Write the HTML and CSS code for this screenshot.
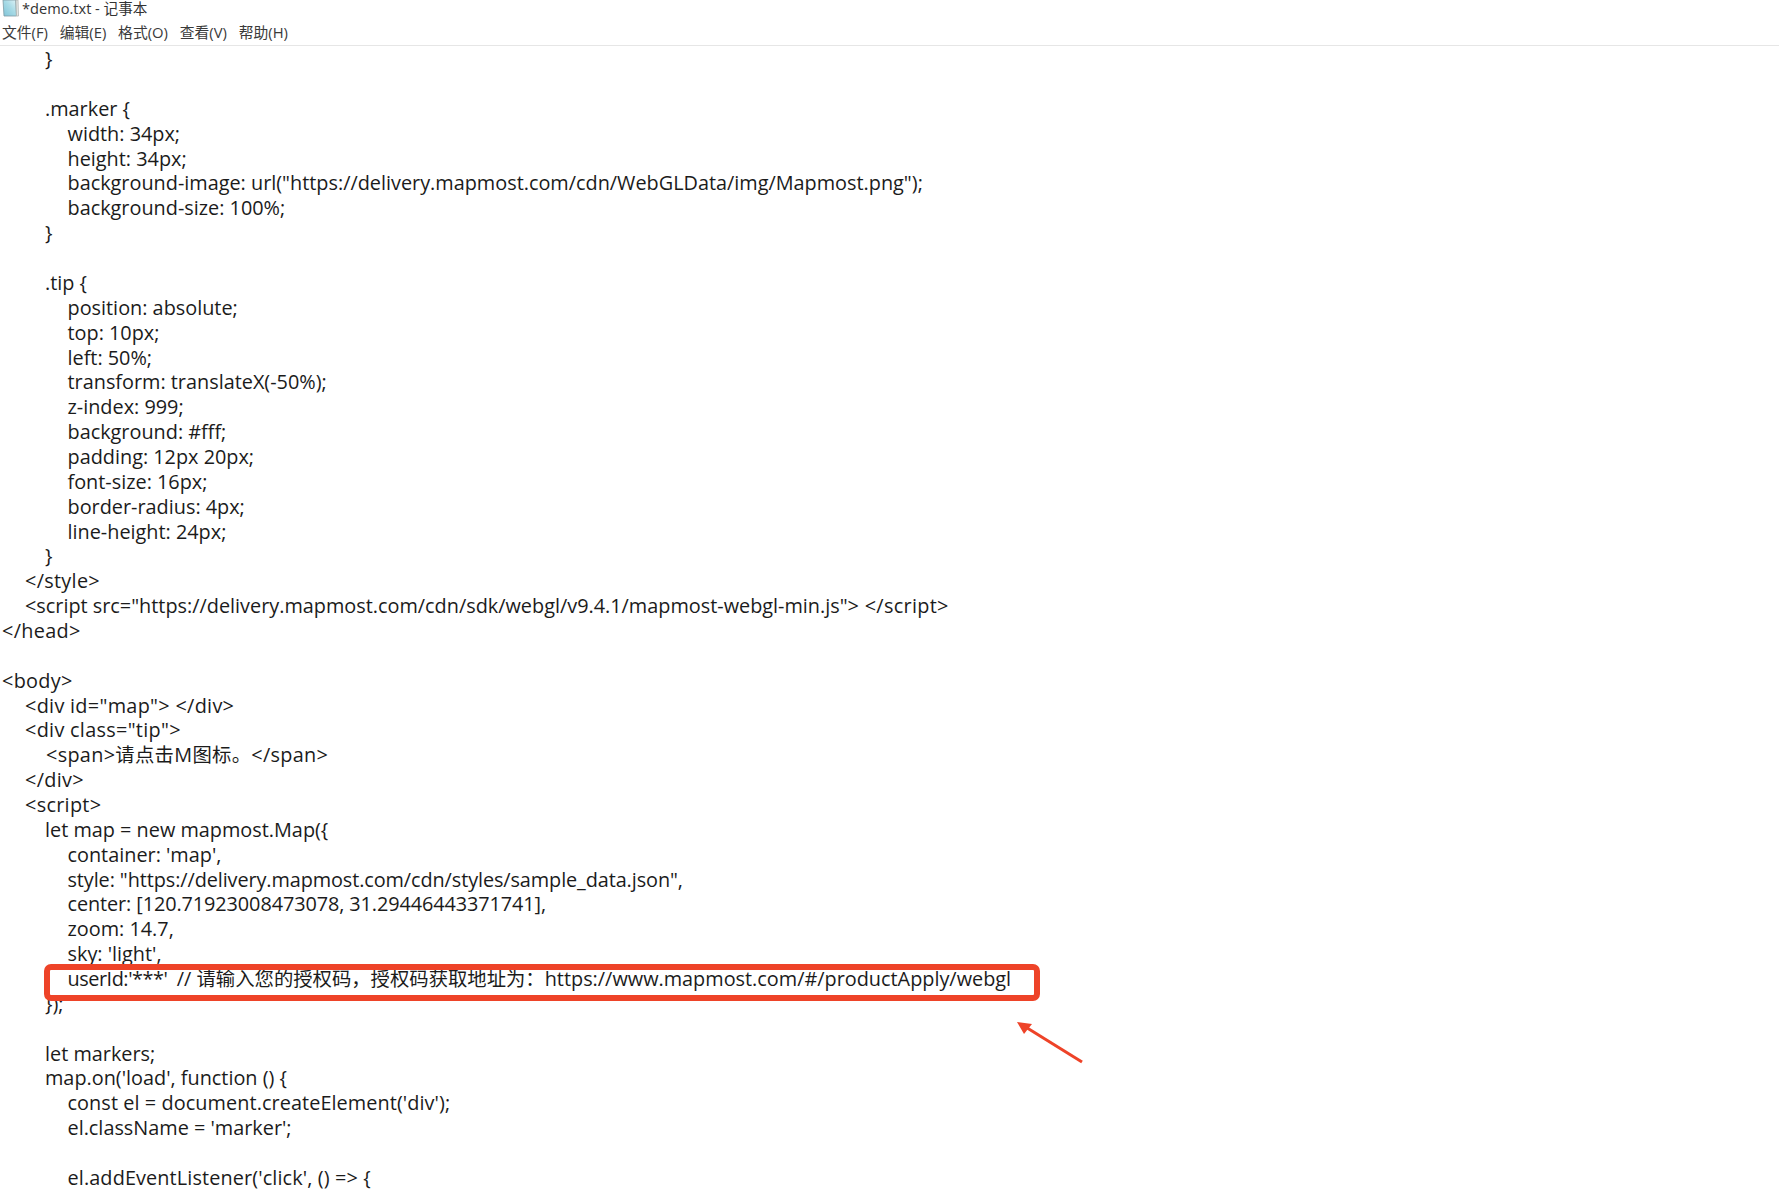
FILE: index.html
```html
<!DOCTYPE html>
<html lang="zh-CN">
<head>
<meta charset="utf-8">
<title>*demo.txt - 记事本</title>
<link rel="stylesheet" href="styles.css">
</head>
<body>
<div class="window">
  <div class="titlebar">
    <svg class="app-icon" viewBox="0 0 18 18" aria-hidden="true">
      <defs>
        <linearGradient id="pad" x1="0" y1="1" x2="1" y2="0">
          <stop offset="0" stop-color="#7fc4d8"/>
          <stop offset="0.55" stop-color="#a8dbe6"/>
          <stop offset="1" stop-color="#dff2f5"/>
        </linearGradient>
      </defs>
      <path d="M2 0h12.500l1 16H3z" fill="url(#pad)" stroke="#7f9aa3" stroke-width="0.8"/>
      <path d="M15 0h2l0.500 16h-2z" fill="#e6e9e7" stroke="#aeb5b2" stroke-width="0.8"/>
    </svg>
    <span class="title">*demo.txt - 记事本</span>
  </div>
  <div class="menubar">
    <span>文件(F)</span><span>编辑(E)</span><span>格式(O)</span><span>查看(V)</span><span>帮助(H)</span>
  </div>
  <div class="editor">
    <div class="line i2">}</div>
    <div class="line"></div>
    <div class="line i2">.marker {</div>
    <div class="line i3">width: 34px;</div>
    <div class="line i3">height: 34px;</div>
    <div class="line i3">background-image: url("https://delivery.mapmost.com/cdn/WebGLData/img/Mapmost.png");</div>
    <div class="line i3">background-size: 100%;</div>
    <div class="line i2">}</div>
    <div class="line"></div>
    <div class="line i2">.tip {</div>
    <div class="line i3">position: absolute;</div>
    <div class="line i3">top: 10px;</div>
    <div class="line i3">left: 50%;</div>
    <div class="line i3">transform: translateX(-50%);</div>
    <div class="line i3">z-index: 999;</div>
    <div class="line i3">background: #fff;</div>
    <div class="line i3">padding: 12px 20px;</div>
    <div class="line i3">font-size: 16px;</div>
    <div class="line i3">border-radius: 4px;</div>
    <div class="line i3">line-height: 24px;</div>
    <div class="line i2">}</div>
    <div class="line i1 tag">&lt;/style&gt;</div>
    <div class="line i1">&lt;script src="https://delivery.mapmost.com/cdn/sdk/webgl/v9.4.1/mapmost-webgl-min.js"<span class="tag">&gt; &lt;/script&gt;</span></div>
    <div class="line tag">&lt;/head&gt;</div>
    <div class="line"></div>
    <div class="line tag">&lt;body&gt;</div>
    <div class="line i1 tag">&lt;div id="map"&gt; &lt;/div&gt;</div>
    <div class="line i1 tag">&lt;div class="tip"&gt;</div>
    <div class="line i2b tag">&lt;span&gt;<span class="cjk">请点击</span>M<span class="cjk">图标。</span>&lt;/span&gt;</div>
    <div class="line i1 tag">&lt;/div&gt;</div>
    <div class="line i1 tag">&lt;script&gt;</div>
    <div class="line i2">let map = new mapmost.Map({</div>
    <div class="line i3">container: 'map',</div>
    <div class="line i3 tight">style: "https://delivery.mapmost.com/cdn/styles/sample_data.json",</div>
    <div class="line i3 tight">center: [120.71923008473078, 31.29446443371741],</div>
    <div class="line i3">zoom: 14.7,</div>
    <div class="line i3">sky: 'light',</div>
    <div class="line i3"><span class="key">userId:'***'  </span>// <span class="cjk">请输入您的授权码，授权码获取地址为：</span>https://www.mapmost.com/#/productApply/webgl</div>
    <div class="line i2">});</div>
    <div class="line"></div>
    <div class="line i2">let markers;</div>
    <div class="line i2">map.on('load', function () {</div>
    <div class="line i3 wide">const el = document.createElement('div');</div>
    <div class="line i3">el.className = 'marker';</div>
    <div class="line"></div>
    <div class="line i3 wider">el.addEventListener('click', () =&gt; {</div>
  </div>
  <div class="highlight"></div>
  <svg class="arrow" viewBox="0 0 70 50" aria-hidden="true">
    <path d="M66 40L8 4" fill="none" stroke="#ee4328" stroke-width="3"/>
    <path d="M1 0L16 2L8 12z" fill="#ee4328"/>
  </svg>
</div>
</body>
</html>
```
FILE: styles.css
```css
html, body { margin: 0; padding: 0; background: #fff; }
body { height: 1196px; overflow: hidden; }
.window {
  position: relative;
  height: 1196px;
  overflow: hidden;
  color: #1b1b1b;
  font-family: "Open Sans", "Noto Sans CJK SC", sans-serif;
}
.titlebar { display: flex; align-items: flex-start; height: 18px; gap: 3px; padding-left: 1px; }
.app-icon { width: 18px; height: 18px; flex: none; }
.title { font-size: 14.6px; line-height: 16px; color: #333; }
.menubar {
  display: flex;
  gap: 11.8px;
  height: 28px;
  padding: 0 0 1px 2px;
  align-items: center;
  font-size: 14.8px;
  color: #3a3a3a;
  border-bottom: 1px solid #e6e6e6;
  box-sizing: border-box;
}
.editor { padding: 1.2px 0 0 2px; font-size: 19.85px; }
.cjk { font-size: 19.35px; }
.line { height: 24.87px; line-height: 24.87px; white-space: pre; }
.i1 { padding-left: 23px; }
.i2 { padding-left: 43px; }
.i2b { padding-left: 44px; }
.i3 { padding-left: 65.500px; }
.tag { letter-spacing: 0.3px; }
.tight { letter-spacing: -0.09px; }
.wide { letter-spacing: 0.08px; }
.wider { letter-spacing: 0.12px; }
.key { letter-spacing: -0.45px; }
.highlight {
  position: absolute;
  left: 44px;
  top: 964px;
  width: 996px;
  height: 37px;
  box-sizing: border-box;
  border: 6px solid #ee4328;
  border-radius: 7px;
}
.arrow { position: absolute; left: 1016px; top: 1022px; width: 70px; height: 50px; }
```
